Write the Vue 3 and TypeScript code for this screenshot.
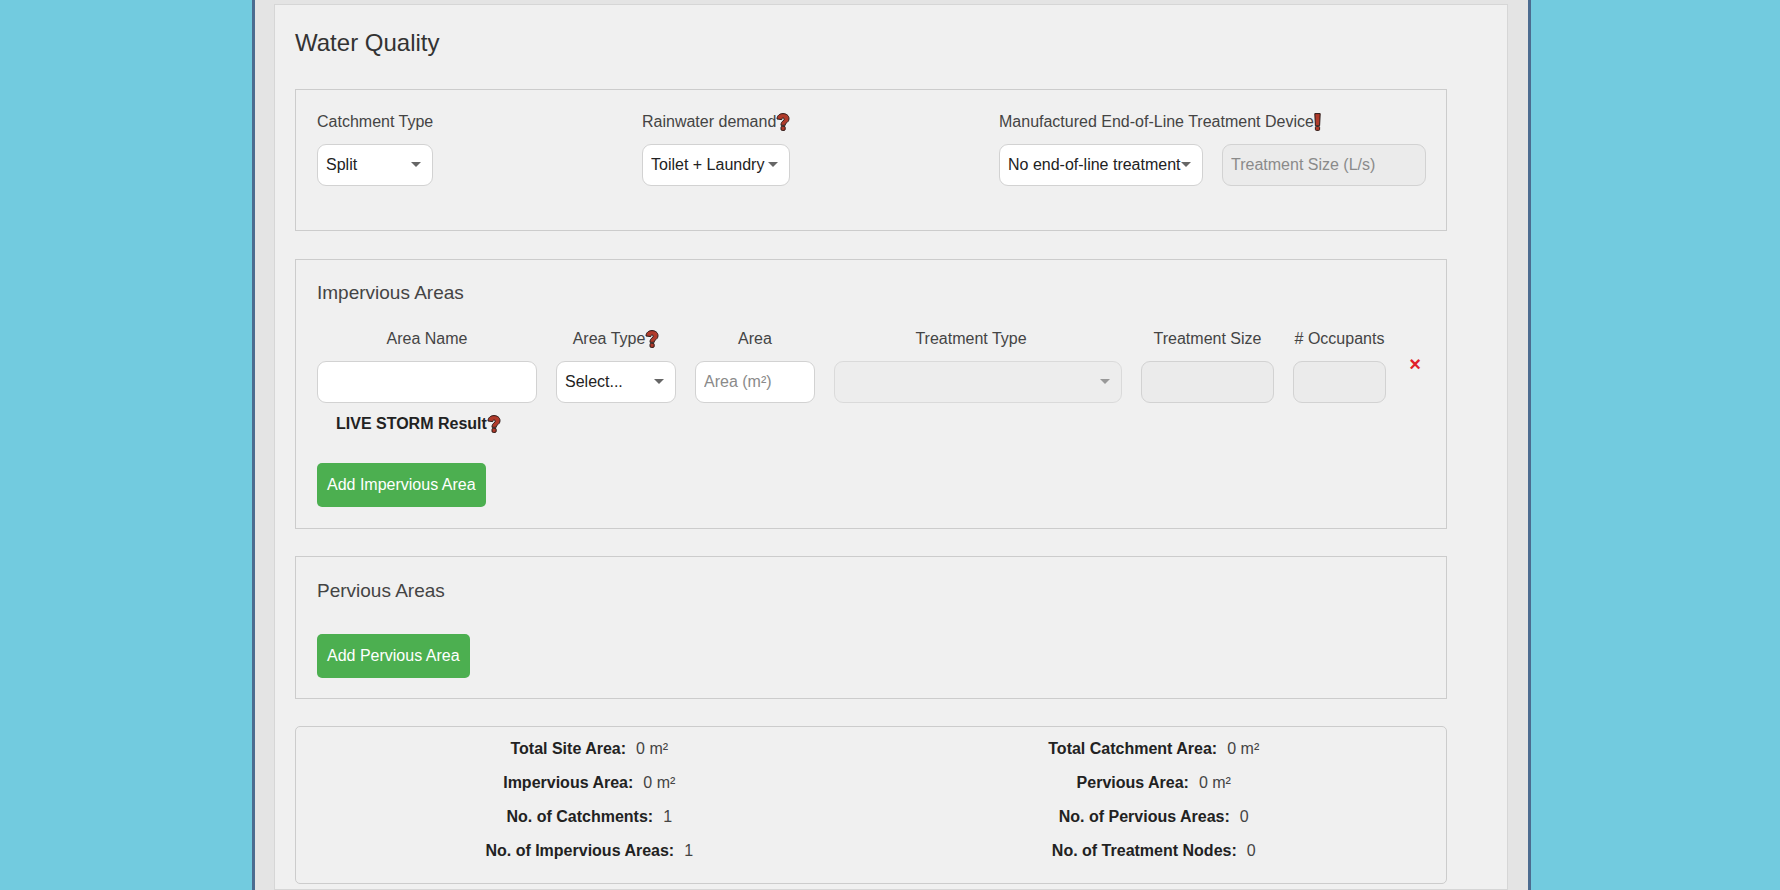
<script setup lang="ts">
interface Stat { label: string; value: string }
const stats: Stat[] = [
  { label: 'Total Site Area:', value: '0 m²' },
  { label: 'Total Catchment Area:', value: '0 m²' },
  { label: 'Impervious Area:', value: '0 m²' },
  { label: 'Pervious Area:', value: '0 m²' },
  { label: 'No. of Catchments:', value: '1' },
  { label: 'No. of Pervious Areas:', value: '0' },
  { label: 'No. of Impervious Areas:', value: '1' },
  { label: 'No. of Treatment Nodes:', value: '0' },
]
</script>

<template>
  <div class="page">
    <main class="shell">
      <section class="card">
        <h1 class="title">Water Quality</h1>

        <section class="box top-box">
          <div class="top-field w116">
            <label class="lbl">Catchment Type</label>
            <div class="sel"><select><option>Split</option></select></div>
          </div>
          <div class="top-field w148">
            <label class="lbl">Rainwater demand<svg class="q" viewBox="0 0 14 18"><path d="M1 6C1 2.500 3.800.6 7 .6s6 1.900 6 5c0 2.500-1.400 3.500-2.800 4.500-.8.600-1 1-1 2.200H5c0-2.300.6-3.400 2-4.400.8-.6 1.300-1 1.300-1.800 0-.7-.5-1.100-1.200-1.100-.9 0-1.300.6-1.300 1.600z" /><rect x="5" y="13.300" width="4.200" height="4.100" rx="1.200" /></svg></label>
            <div class="sel"><select><option>Toilet + Laundry</option></select></div>
          </div>
          <div class="top-field">
            <label class="lbl">Manufactured End-of-Line Treatment Device<svg class="ex" viewBox="0 0 7 18"><path d="M.8.6h5.400l-.6 12.200H1.400z" /><rect x="1.400" y="13.400" width="4.200" height="4" rx="1" /></svg></label>
            <div class="pair">
              <div class="sel"><select><option>No end-of-line treatment</option></select></div>
              <input class="inp" disabled placeholder="Treatment Size (L/s)" />
            </div>
          </div>
        </section>

        <section class="box area-box">
          <h2 class="sub">Impervious Areas</h2>
          <div class="grid-row heads">
            <span>Area Name</span>
            <span>Area Type<svg class="q" viewBox="0 0 14 18"><path d="M1 6C1 2.500 3.800.6 7 .6s6 1.900 6 5c0 2.500-1.400 3.500-2.800 4.500-.8.600-1 1-1 2.200H5c0-2.300.6-3.400 2-4.400.8-.6 1.300-1 1.300-1.800 0-.7-.5-1.100-1.200-1.100-.9 0-1.300.6-1.300 1.600z" /><rect x="5" y="13.300" width="4.200" height="4.100" rx="1.200" /></svg></span>
            <span>Area</span>
            <span class="tt-head">Treatment Type</span>
            <span>Treatment Size</span>
            <span># Occupants</span>
          </div>
          <div class="grid-row">
            <input class="inp" />
            <div class="sel"><select><option>Select...</option></select></div>
            <input class="inp" placeholder="Area (m²)" />
            <div class="sel off"><select disabled><option></option></select></div>
            <input class="inp" disabled />
            <input class="inp" disabled />
            <span class="del">×</span>
          </div>
          <p class="live">LIVE STORM Result<svg class="q" viewBox="0 0 14 18"><path d="M1 6C1 2.500 3.800.6 7 .6s6 1.900 6 5c0 2.500-1.400 3.500-2.800 4.500-.8.600-1 1-1 2.200H5c0-2.300.6-3.400 2-4.400.8-.6 1.300-1 1.300-1.800 0-.7-.5-1.100-1.200-1.100-.9 0-1.300.6-1.300 1.600z" /><rect x="5" y="13.300" width="4.200" height="4.100" rx="1.200" /></svg></p>
          <button class="btn" type="button">Add Impervious Area</button>
        </section>

        <section class="box perv-box">
          <h2 class="sub">Pervious Areas</h2>
          <button class="btn" type="button">Add Pervious Area</button>
        </section>

        <section class="box stats">
          <div v-for="s in stats" :key="s.label" class="stat">
            <b>{{ s.label }}</b><span>{{ s.value }}</span>
          </div>
        </section>
      </section>
    </main>
  </div>
</template>

<style scoped>
.page {
  height: 890px;
  overflow: hidden;
  background: #72cbdf;
  padding-left: 252px;
  box-sizing: border-box;
  font-family: "Liberation Sans", Arial, sans-serif;
  font-size: 16px;
  color: #444;
}
.shell {
  width: 1279px;
  height: 890px;
  box-sizing: border-box;
  background: #e4e4e4;
  border-left: 3px solid #4c6c90;
  border-right: 3px solid #4c6c90;
  padding: 4px 20px 0 19px;
}
.card {
  width: 1234px;
  height: 886px;
  box-sizing: border-box;
  background: #f0f0f0;
  border: 1px solid #d6d6d6;
  padding: 0 59px 0 20px;
}
.title {
  margin: 0;
  font-size: 24px;
  font-weight: 400;
  line-height: 28px;
  padding-top: 24px;
  height: 84px;
  box-sizing: border-box;
  color: #333;
}
.box {
  box-sizing: border-box;
  width: 1152px;
  border: 1px solid #ccc;
}
.top-box {
  height: 142px;
  padding: 21px 20px 0 21px;
  display: flex;
  justify-content: space-between;
  margin-bottom: 28px;
}
.top-field { display: flex; flex-direction: column; }
.w116 { width: 116px; }
.w148 { width: 148px; }
.lbl {
  display: flex;
  align-items: center;
  height: 22px;
  margin-bottom: 11px;
  white-space: nowrap;
}
.pair {
  display: grid;
  grid-template-columns: 204px 204px;
  column-gap: 19px;
}
.sel { position: relative; height: 42px; }
.sel select {
  appearance: none;
  width: 100%;
  height: 42px;
  box-sizing: border-box;
  border: 1px solid #d2d2d2;
  border-radius: 9px;
  background: #fff;
  padding: 0 0 2px 8px;
  font: 16px "Liberation Sans", Arial, sans-serif;
  color: #222;
}
.sel::after {
  content: "";
  position: absolute;
  right: 12px;
  top: 18px;
  border-left: 5px solid transparent;
  border-right: 5px solid transparent;
  border-top: 5px solid #666;
  pointer-events: none;
}
.sel.off select { background: #ececec; }
.sel.off::after { border-top-color: #999; }
.inp {
  display: block;
  width: 100%;
  height: 42px;
  box-sizing: border-box;
  border: 1px solid #d2d2d2;
  border-radius: 9px;
  background: #fff;
  padding: 0 8px;
  font: 16px "Liberation Sans", Arial, sans-serif;
  color: #222;
}
.inp:disabled { background: #ebebeb; }
.inp::placeholder { color: #8a8a8a; opacity: 1; }
.area-box {
  height: 270px;
  padding: 21px 20px 20px 21px;
  margin-bottom: 27px;
}
.sub {
  margin: 0;
  font-size: 19px;
  font-weight: 400;
  line-height: 24px;
  color: #444;
}
.grid-row {
  display: grid;
  grid-template-columns: 220px 120px 120px 288px 133px 93px 20px;
  column-gap: 19px;
}
.heads {
  margin-top: 23px;
  height: 22px;
  margin-bottom: 11px;
  line-height: 22px;
  text-align: center;
}
.heads span { display: flex; align-items: center; justify-content: center; white-space: nowrap; }
.heads .tt-head { padding-right: 14px; }
.del {
  color: #e0202a;
  font-size: 20px;
  font-weight: 700;
  line-height: 20px;
  height: 20px;
  margin-top: -7px;
  text-align: center;
}
.live {
  margin: 10px 0 0 19px;
  height: 22px;
  display: flex;
  align-items: center;
  font-weight: 700;
  color: #222;
}
.btn {
  display: block;
  height: 44px;
  border: 0;
  border-radius: 5px;
  background: #4caf50;
  color: #fff;
  padding: 0 10px;
  font: 16px "Liberation Sans", Arial, sans-serif;
}
.area-box .btn { margin-top: 28px; }
.perv-box {
  height: 143px;
  padding: 22px 20px 20px 21px;
  margin-bottom: 27px;
}
.perv-box .btn { margin-top: 31px; }
.stats {
  height: 158px;
  border-radius: 5px;
  padding: 5px 10px 0 11px;
  display: grid;
  grid-template-columns: 1fr 1fr;
  grid-auto-rows: 34px;
}
.stat {
  display: flex;
  align-items: center;
  justify-content: center;
  gap: 10px;
}
.stat b { color: #222; }
.stat span { color: #444; }
.q { width: 14px; height: 18px; flex: none; }
.q path, .q rect, .ex path, .ex rect {
  fill: #b03a2a;
  stroke: #2b1a18;
  stroke-width: 1;
}
.ex { width: 7px; height: 18px; flex: none; }
</style>

<style>
html, body { margin: 0; overflow: hidden; }
</style>
